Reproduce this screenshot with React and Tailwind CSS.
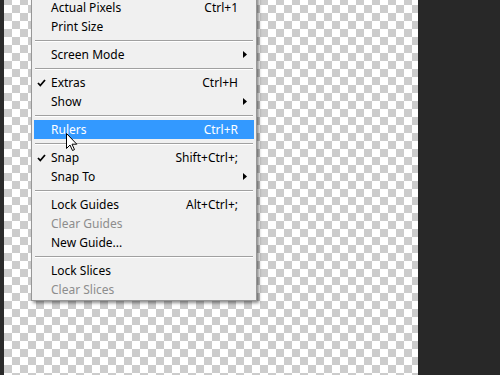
const items = [
  { label: "Actual Pixels", shortcut: "Ctrl+1" },
  { label: "Print Size" },
  "sep",
  { label: "Screen Mode", submenu: true },
  "sep",
  { label: "Extras", shortcut: "Ctrl+H", checked: true },
  { label: "Show", submenu: true },
  "sep",
  { label: "Rulers", shortcut: "Ctrl+R", active: true },
  "sep",
  { label: "Snap", shortcut: "Shift+Ctrl+;", checked: true },
  { label: "Snap To", submenu: true },
  "sep",
  { label: "Lock Guides", shortcut: "Alt+Ctrl+;" },
  { label: "Clear Guides", disabled: true },
  { label: "New Guide..." },
  "sep",
  { label: "Lock Slices" },
  { label: "Clear Slices", disabled: true },
];

function Check() {
  return (
    <svg className="absolute left-[3px] top-[6px]" width="9" height="8" viewBox="0 0 9 8">
      <path d="M1 4 L3.3 6.5 L8 1" fill="none" stroke="#000" strokeWidth="1.8" />
    </svg>
  );
}

function Arrow() {
  return (
    <svg className="absolute right-[7px] top-[6px]" width="4" height="7" viewBox="0 0 4 7">
      <path d="M0 0 L4 3.5 L0 7 Z" fill="#000" />
    </svg>
  );
}

function Row({ item }) {
  const color = item.active ? "text-white" : item.disabled ? "text-[#8d8d8d]" : "text-black";
  return (
    <div className={`relative flex h-[19px] items-center pl-[17px] pr-[16px] ${item.active ? "bg-[#3399ff]" : ""} ${color}`}>
      {item.checked && <Check />}
      <span className="flex-1">{item.label}</span>
      {item.shortcut && <span>{item.shortcut}</span>}
      {item.submenu && <Arrow />}
    </div>
  );
}

export default function App() {
  return (
    <div className="flex h-[375px] w-[500px] overflow-hidden font-['Noto_Sans',sans-serif] text-[12px]">
      <div className="w-[4px] bg-[#2b2b2b]" />

      {/* canvas */}
      <div className="relative w-[414px] bg-[conic-gradient(#fff_25%,#ccc_0_50%,#fff_0_75%,#ccc_0)] bg-[length:16px_16px] bg-[position:0px_-3px]">
        <div className="absolute left-[27px] top-[-5px] w-[226px] border border-[#979797] bg-[#f0f0f0] px-[2px] pt-[2px] pb-[1px] shadow-[2px_2px_3px_rgba(0,0,0,0.45)]">
          {items.map((it, i) =>
            it === "sep" ? (
              <div key={i} className="h-[9px] pt-[4px] px-[1px]">
                <div className="h-px bg-[#a0a0a0]" />
                <div className="h-px bg-white" />
              </div>
            ) : (
              <Row key={i} item={it} />
            )
          )}
        </div>

        {/* mouse cursor */}
        <svg className="absolute left-[62px] top-[133px]" width="12" height="19" viewBox="0 0 12 19">
          <path d="M0.5 0.5 L0.5 15.5 L4 12 L6.5 17.5 L8.5 16.6 L6 11.2 L10.8 11.2 Z" fill="#fff" stroke="#000" strokeWidth="1" strokeLinejoin="miter" />
        </svg>
      </div>

      <div className="flex-1 bg-[#282828]" />
    </div>
  );
}
